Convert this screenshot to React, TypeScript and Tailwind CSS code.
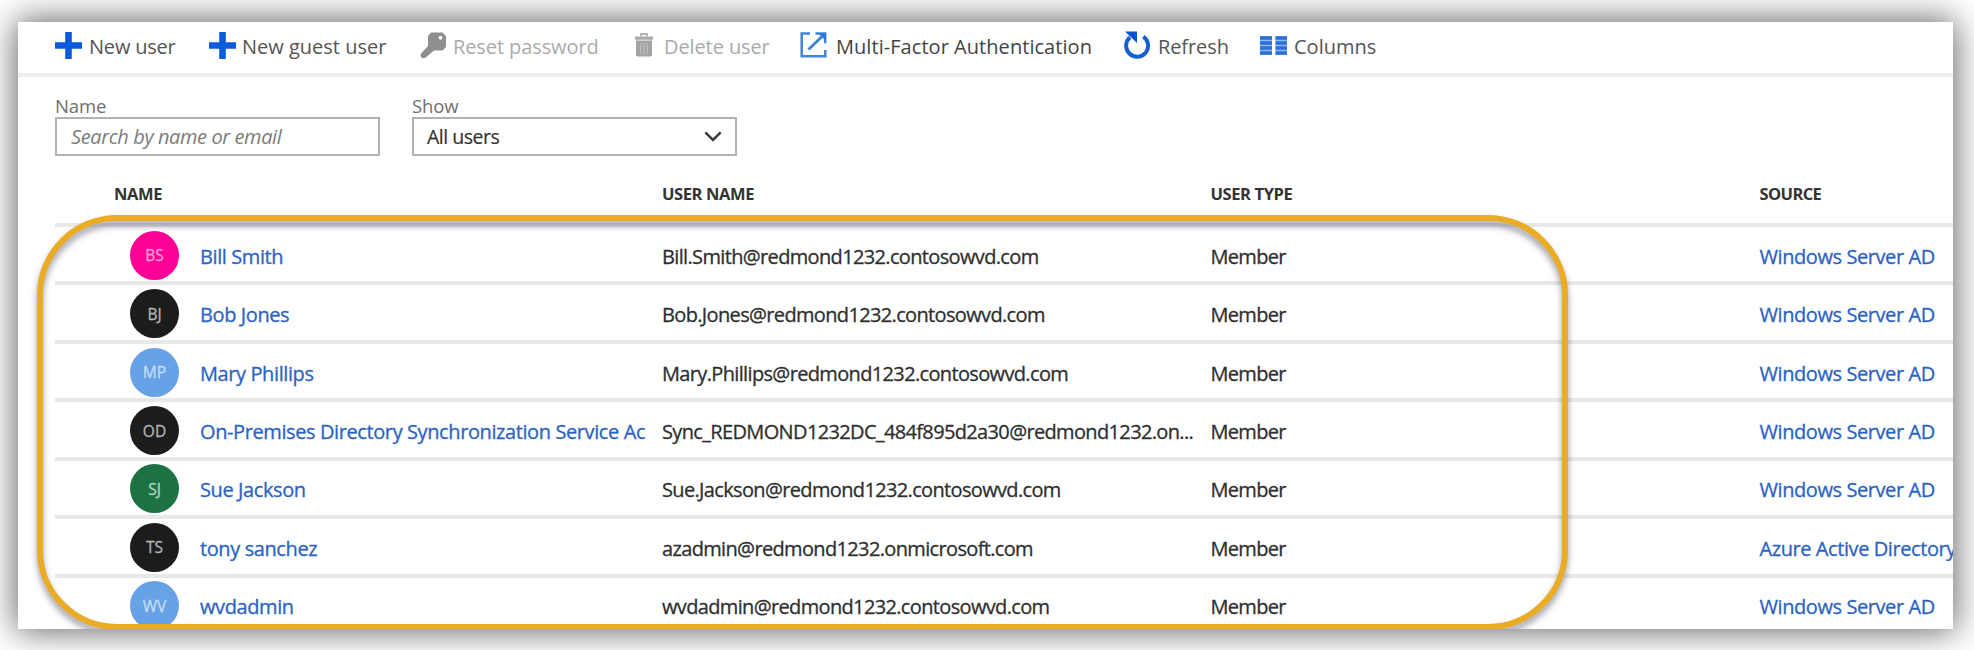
import React from "react";

function PlusIcon() {
  return (
    <svg width="27" height="27" viewBox="0 0 27 27">
      <path d="M13.5 0v27M0 13.5h27" stroke="#0b5bdb" strokeWidth="6.6" />
    </svg>
  );
}

function KeyIcon() {
  return (
    <svg width="27" height="27" viewBox="0 0 27 27">
      <path
        fillRule="evenodd"
        fill="#8f8f8f"
        d="M11 .5h11.500l3.500 3.500v11l-3.500 3.500h-8.500l-8.500 7.200q-3.500 1.300-4.800-1.200-.8-1.800.8-3.500L8 14V4zM20.500 3.800a1.900 1.900 0 1 0 .01 3.800a1.900 1.900 0 1 0 0-3.800z"
      />
    </svg>
  );
}

function TrashIcon() {
  return (
    <svg width="18" height="25" viewBox="0 0 18 25">
      <path d="M6 3.500V1h6v2.500" fill="none" stroke="#b0b0b0" strokeWidth="1.800" />
      <path d="M0 3.500h18v3.200H0z" fill="#a8a8a8" />
      <path d="M1 7.500h16v14q0 2-2 2H3q-2 0-2-2z" fill="#a3a3a3" />
      <path d="M5.800 10v11M9 10v11M12.200 10v11" stroke="#bcbcbc" strokeWidth="1.300" />
    </svg>
  );
}

function ExternalIcon() {
  return (
    <svg width="27" height="26" viewBox="0 0 27 26" fill="none" stroke="#3f84da">
      <path d="M10 1.500H1.700v22.800h23.600V18" strokeWidth="2.500" />
      <path d="M8.500 17.500L22.500 4" strokeWidth="2.900" />
      <path d="M15.500 1.500h9.700v9.700" strokeWidth="2.500" />
      <path d="M18 1h8v8z" fill="#3079d6" stroke="none" />
    </svg>
  );
}

function RefreshIcon() {
  return (
    <svg width="27" height="28" viewBox="0 0 27 28">
      <path d="M19.300 5.600A11 11 0 1 1 6 6.300" fill="none" stroke="#1560cf" strokeWidth="4" />
      <path d="M1 .5h12v11.500z" fill="#0b52cc" />
    </svg>
  );
}

function ColumnsIcon() {
  return (
    <svg width="27" height="19" viewBox="0 0 27 19">
      <path d="M0 0h12v19H0zM15.500 0h11.500v19H15.500z" fill="#8fb8ee" />
      <path
        d="M0 2h12M0 7h12M0 12h12M0 17h12M15.500 2h11.500M15.500 7h11.500M15.500 12h11.500M15.500 17h11.500"
        stroke="#2a70d8"
        strokeWidth="3.400"
      />
    </svg>
  );
}

const actions = [
  { label: "New user", icon: <PlusIcon />, box: "w-[154px]", iconBox: "w-[34px]", text: "text-[#555] tracking-[-0.2px]" },
  { label: "New guest user", icon: <PlusIcon />, box: "w-[211px]", iconBox: "w-[33px]", text: "text-[#555]" },
  { label: "Reset password", icon: <KeyIcon />, box: "w-[215px]", iconBox: "w-[33px]", text: "text-[#ababab] tracking-[-0.1px]" },
  { label: "Delete user", icon: <TrashIcon />, box: "w-[165px]", iconBox: "w-[29px]", text: "text-[#ababab] tracking-[-0.1px]" },
  { label: "Multi-Factor Authentication", icon: <ExternalIcon />, box: "w-[324px]", iconBox: "w-[36px]", text: "text-[#444] tracking-[0.05px]" },
  { label: "Refresh", icon: <RefreshIcon />, box: "w-[136px]", iconBox: "w-[34px]", text: "text-[#555] tracking-[-0.1px]" },
  { label: "Columns", icon: <ColumnsIcon />, box: "w-[130px]", iconBox: "w-[34px]", text: "text-[#555]" },
];

const users = [
  { initials: "BS", color: "bg-[#ff0097] text-[#ff9bd6]", name: "Bill Smith", email: "Bill.Smith@redmond1232.contosowvd.com", source: "Windows Server AD" },
  { initials: "BJ", color: "bg-[#1c1c1c] text-[#b5b5b5]", name: "Bob Jones", email: "Bob.Jones@redmond1232.contosowvd.com", source: "Windows Server AD" },
  { initials: "MP", color: "bg-[#67a2e6] text-[#c4dcf7]", name: "Mary Phillips", email: "Mary.Phillips@redmond1232.contosowvd.com", source: "Windows Server AD" },
  { initials: "OD", color: "bg-[#1c1c1c] text-[#b5b5b5]", name: "On-Premises Directory Synchronization Service Account", email: "Sync_REDMOND1232DC_484f895d2a30@redmond1232.on...", source: "Windows Server AD" },
  { initials: "SJ", color: "bg-[#1c7243] text-[#b4d3c1]", name: "Sue Jackson", email: "Sue.Jackson@redmond1232.contosowvd.com", source: "Windows Server AD" },
  { initials: "TS", color: "bg-[#1c1c1c] text-[#b5b5b5]", name: "tony sanchez", email: "azadmin@redmond1232.onmicrosoft.com", source: "Azure Active Directory" },
  { initials: "WV", color: "bg-[#67a2e6] text-[#c4dcf7]", name: "wvdadmin", email: "wvdadmin@redmond1232.contosowvd.com", source: "Windows Server AD" },
];

export default function App() {
  return (
    <div className="h-[650px] w-[1974px] overflow-hidden bg-white pt-[22px] pl-[18px] font-['Open_Sans',sans-serif]">
      <div className="relative h-[607px] w-[1935px] bg-white shadow-[0_0_32px_2px_rgba(0,0,0,0.62)]">
        <div className="flex h-full flex-col overflow-hidden whitespace-nowrap">
          <div className="flex h-[55px] shrink-0 items-start border-b-4 border-[#eeeeee] pl-[37px] text-[20px]">
            {actions.map((a) => (
              <button key={a.label} className={`flex h-[46px] shrink-0 items-center ${a.box}`}>
                <span className={`shrink-0 ${a.iconBox}`}>{a.icon}</span>
                <span className={`pt-[4px] leading-[20px] ${a.text}`}>{a.label}</span>
              </button>
            ))}
          </div>

          <div className="flex h-[79px] shrink-0 gap-[32px] pt-[19px] pl-[37px]">
            <label className="flex w-[325px] flex-col">
              <span className="h-[21px] text-[18.5px] leading-[20px] tracking-[-0.1px] text-[#707070]">Name</span>
              <span className="flex h-[39px] items-center border-2 border-[#b2b2b2] pl-[14px] text-[20px] leading-[20px] tracking-[-0.4px] text-[#7c7c7c] italic">
                Search by name or email
              </span>
            </label>
            <label className="flex w-[325px] flex-col">
              <span className="h-[21px] text-[18.5px] leading-[20px] tracking-[-0.1px] text-[#707070]">Show</span>
              <span className="flex h-[39px] items-center justify-between border-2 border-[#b2b2b2] pr-[13px] pl-[13px] text-[19.5px] leading-[20px] tracking-[-0.5px] text-[#333] [-webkit-text-stroke:0.2px]">
                All users
                <svg width="18" height="11" viewBox="0 0 20 12" fill="none" stroke="#3c3c3c" strokeWidth="2.8">
                  <path d="M1.500 1.500L10 9.800L18.500 1.500" />
                </svg>
              </span>
            </label>
          </div>

          <div className="ml-[37px] flex h-[71px] shrink-0 items-start border-b-4 border-[#e8e8e8] pt-[28px] text-[16.5px] leading-[20px] font-bold tracking-[-0.4px] text-[#333]">
            <div className="w-[607px] shrink-0 pl-[59px]">NAME</div>
            <div className="w-[548.500px] shrink-0">USER NAME</div>
            <div className="w-[549px] shrink-0">USER TYPE</div>
            <div className="tracking-[-0.6px]">SOURCE</div>
          </div>

          {users.map((u) => (
            <div key={u.name} className="ml-[37px] flex h-[58.450px] shrink-0 items-center border-b-4 border-[#e8e8e8] text-[20px] leading-[30px] text-[#2f2f2f] [-webkit-text-stroke:0.3px]">
              <div className="flex w-[607px] shrink-0 items-center pl-[75px]">
                <span className={`mt-[2px] flex h-[49px] w-[49px] shrink-0 items-center justify-center rounded-full text-[15.500px] ${u.color}`}>
                  {u.initials}
                </span>
                <span className="mt-[5px] ml-[21px] w-[446px] overflow-hidden tracking-[-0.4px] text-[#2b63c2]">{u.name}</span>
              </div>
              <div className="mt-[5px] w-[548.500px] shrink-0 tracking-[-0.65px]">{u.email}</div>
              <div className="mt-[5px] w-[549px] shrink-0 tracking-[-0.7px]">Member</div>
              <div className="mt-[5px] tracking-[-0.42px] text-[#2b63c2]">{u.source}</div>
            </div>
          ))}
        </div>

        <div className="pointer-events-none absolute inset-0 overflow-hidden">
          <div className="absolute top-[193px] left-[19px] h-[415px] w-[1531px] rounded-[80px] border-[6px] border-[#ebac25] drop-shadow-[0_5px_3px_rgba(50,50,80,0.5)]" />
        </div>
      </div>
    </div>
  );
}
